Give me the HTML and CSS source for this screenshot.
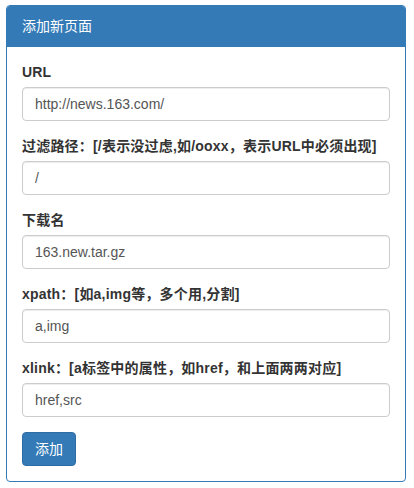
FILE: index.html
```html
<!DOCTYPE html>
<html lang="zh-CN">
<head>
<meta charset="utf-8">
<title>添加新页面</title>
<link rel="stylesheet" href="styles.css">
</head>
<body>
<div class="wrap">
  <div class="panel">
    <div class="panel-heading">添加新页面</div>
    <div class="panel-body">
      <form class="form">
        <div class="form-group">
          <label class="label">URL</label>
          <input class="input" type="text" value="http://news.163.com/">
        </div>
        <div class="form-group">
          <label class="label">过滤路径：[/表示没过虑,如/ooxx，表示URL中必须出现]</label>
          <input class="input" type="text" value="/">
        </div>
        <div class="form-group">
          <label class="label">下载名</label>
          <input class="input" type="text" value="163.new.tar.gz">
        </div>
        <div class="form-group">
          <label class="label">xpath：[如a,img等，多个用,分割]</label>
          <input class="input" type="text" value="a,img">
        </div>
        <div class="form-group">
          <label class="label">xlink：[a标签中的属性，如href，和上面两两对应]</label>
          <input class="input" type="text" value="href,src">
        </div>
        <button class="btn" type="button">添加</button>
      </form>
    </div>
  </div>
</div>
</body>
</html>
```
FILE: styles.css
```css
* { box-sizing: border-box; }
html, body {
  margin: 0;
  padding: 0;
  background: #fff;
}
body {
  font-family: "Liberation Sans", Arial, "Noto Sans CJK SC", sans-serif;
  font-size: 14px;
  line-height: 20px;
  color: #333;
}
.wrap {
  padding: 5px 8px 0 6px;
}
.panel {
  width: 400px;
  border: 1px solid #337ab7;
  border-radius: 4px;
  background: #fff;
}
.panel-heading {
  background: #337ab7;
  color: #fff;
  padding: 10px 15px;
  border-bottom: 1px solid #337ab7;
  border-radius: 3px 3px 0 0;
  font-size: 14px;
  line-height: 20px;
}
.panel-body {
  padding: 15px;
}
.form {
  display: flex;
  flex-direction: column;
  align-items: flex-start;
}
.form-group {
  display: flex;
  flex-direction: column;
  width: 100%;
  margin-bottom: 15px;
}
.label {
  font-weight: bold;
  margin-bottom: 5px;
  display: block;
  letter-spacing: 0.2px;
}
.input {
  display: block;
  width: 100%;
  height: 34px;
  padding: 6px 12px;
  font-family: inherit;
  font-size: 14px;
  line-height: 20px;
  color: #555;
  background: #fff;
  border: 1px solid #ccc;
  border-radius: 4px;
  box-shadow: inset 0 1px 1px rgba(0,0,0,.075);
  margin: 0;
}
.btn {
  display: inline-block;
  height: 34px;
  padding: 6px 12px;
  font-family: inherit;
  font-size: 14px;
  line-height: 20px;
  color: #fff;
  background: #337ab7;
  border: 1px solid #2e6da4;
  border-radius: 4px;
  margin: 0;
}
```
